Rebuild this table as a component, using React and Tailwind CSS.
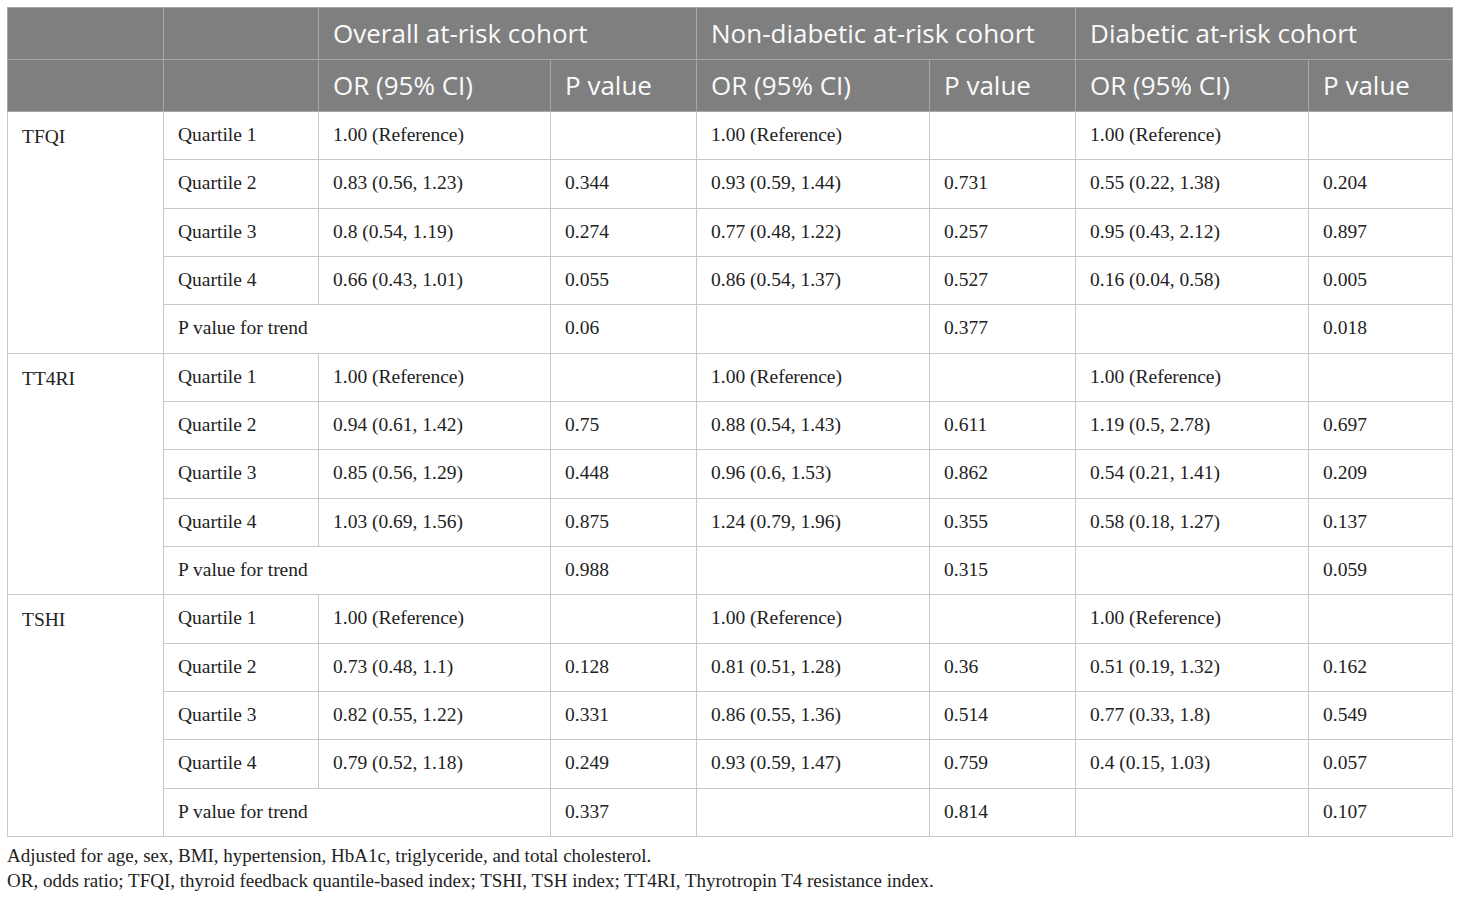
import React from "react";

const groups = [
  {
    name: "TFQI",
    rows: [
      ["Quartile 1", "1.00 (Reference)", "", "1.00 (Reference)", "", "1.00 (Reference)", ""],
      ["Quartile 2", "0.83 (0.56, 1.23)", "0.344", "0.93 (0.59, 1.44)", "0.731", "0.55 (0.22, 1.38)", "0.204"],
      ["Quartile 3", "0.8 (0.54, 1.19)", "0.274", "0.77 (0.48, 1.22)", "0.257", "0.95 (0.43, 2.12)", "0.897"],
      ["Quartile 4", "0.66 (0.43, 1.01)", "0.055", "0.86 (0.54, 1.37)", "0.527", "0.16 (0.04, 0.58)", "0.005"],
    ],
    trend: ["0.06", "0.377", "0.018"],
  },
  {
    name: "TT4RI",
    rows: [
      ["Quartile 1", "1.00 (Reference)", "", "1.00 (Reference)", "", "1.00 (Reference)", ""],
      ["Quartile 2", "0.94 (0.61, 1.42)", "0.75", "0.88 (0.54, 1.43)", "0.611", "1.19 (0.5, 2.78)", "0.697"],
      ["Quartile 3", "0.85 (0.56, 1.29)", "0.448", "0.96 (0.6, 1.53)", "0.862", "0.54 (0.21, 1.41)", "0.209"],
      ["Quartile 4", "1.03 (0.69, 1.56)", "0.875", "1.24 (0.79, 1.96)", "0.355", "0.58 (0.18, 1.27)", "0.137"],
    ],
    trend: ["0.988", "0.315", "0.059"],
  },
  {
    name: "TSHI",
    rows: [
      ["Quartile 1", "1.00 (Reference)", "", "1.00 (Reference)", "", "1.00 (Reference)", ""],
      ["Quartile 2", "0.73 (0.48, 1.1)", "0.128", "0.81 (0.51, 1.28)", "0.36", "0.51 (0.19, 1.32)", "0.162"],
      ["Quartile 3", "0.82 (0.55, 1.22)", "0.331", "0.86 (0.55, 1.36)", "0.514", "0.77 (0.33, 1.8)", "0.549"],
      ["Quartile 4", "0.79 (0.52, 1.18)", "0.249", "0.93 (0.59, 1.47)", "0.759", "0.4 (0.15, 1.03)", "0.057"],
    ],
    trend: ["0.337", "0.814", "0.107"],
  },
];

const th = "border border-[#a6a6a6] px-[14px] text-left font-normal text-[#fafafa]";
const td = "border border-[#c8c8c8] px-[14px] pb-[2px] text-left align-middle";

function App() {
  return (
    <div className="min-h-[898px] bg-white pl-[7px] pt-[7px]">
      <table className="w-[1445px] table-fixed border-collapse">
        <colgroup>
          <col className="w-[156px]" />
          <col className="w-[155px]" />
          <col className="w-[232px]" />
          <col className="w-[146px]" />
          <col className="w-[233px]" />
          <col className="w-[146px]" />
          <col className="w-[233px]" />
          <col className="w-[144px]" />
        </colgroup>
        <thead className="bg-[#7f7f7f] font-['Open_Sans',sans-serif] text-[26px]">
          <tr className="h-[52px]">
            <th className={th}></th>
            <th className={th}></th>
            <th colSpan={2} className={th}>Overall at-risk cohort</th>
            <th colSpan={2} className={th}>Non-diabetic at-risk cohort</th>
            <th colSpan={2} className={th}>Diabetic at-risk cohort</th>
          </tr>
          <tr className="h-[52px]">
            <th className={th}></th>
            <th className={th}></th>
            <th className={th}>OR (95% CI)</th>
            <th className={th}>P value</th>
            <th className={th}>OR (95% CI)</th>
            <th className={th}>P value</th>
            <th className={th}>OR (95% CI)</th>
            <th className={th}>P value</th>
          </tr>
        </thead>
        <tbody className="font-['Liberation_Serif',serif] text-[19.5px] text-[#222]">
          {groups.map((group) => (
            <React.Fragment key={group.name}>
              {group.rows.map((row, i) => (
                <tr key={i} className="h-[48.33px]">
                  {i === 0 && (
                    <td rowSpan={5} className={td + " align-top pt-[10px]"}>
                      {group.name}
                    </td>
                  )}
                  {row.map((cell, j) => (
                    <td key={j} className={td}>
                      {cell}
                    </td>
                  ))}
                </tr>
              ))}
              <tr className="h-[48.33px]">
                <td colSpan={2} className={td}>P value for trend</td>
                <td className={td}>{group.trend[0]}</td>
                <td className={td}></td>
                <td className={td}>{group.trend[1]}</td>
                <td className={td}></td>
                <td className={td}>{group.trend[2]}</td>
              </tr>
            </React.Fragment>
          ))}
        </tbody>
      </table>
      <div className="mt-[6px] font-['Liberation_Serif',serif] text-[19px] leading-[25px] text-[#222]">
        <p>Adjusted for age, sex, BMI, hypertension, HbA1c, triglyceride, and total cholesterol.</p>
        <p>OR, odds ratio; TFQI, thyroid feedback quantile-based index; TSHI, TSH index; TT4RI, Thyrotropin T4 resistance index.</p>
      </div>
    </div>
  );
}

export default App;
